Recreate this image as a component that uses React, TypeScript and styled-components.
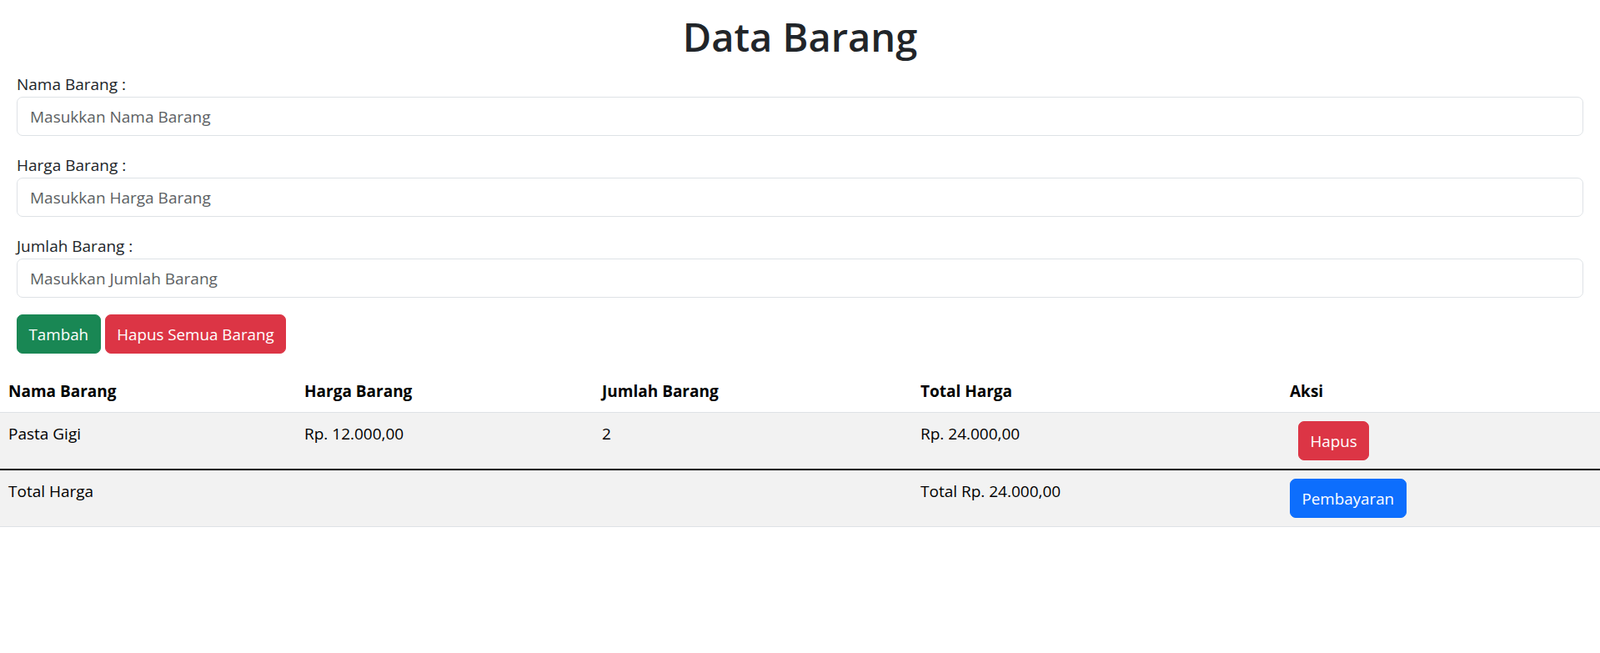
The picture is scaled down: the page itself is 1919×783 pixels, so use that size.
import React from "react";
import styled, { createGlobalStyle } from "styled-components";

const GlobalStyle = createGlobalStyle`
  * { box-sizing: border-box; }
  body {
    margin: 0;
    background: #ffffff;
    color: #212529;
    font-family: "Segoe UI", "Open Sans", "Noto Sans", sans-serif;
    font-size: 19px;
    line-height: 30px;
  }
`;

const Page = styled.div`
  width: 100%;
`;

const Container = styled.div`
  padding: 0 20px;
`;

const Title = styled.h1`
  margin: 14px 0 12px;
  text-align: center;
  font-size: 47px;
  line-height: 60px;
  font-weight: 600;
  color: #212529;
`;

const Field = styled.div`
  margin-bottom: 20px;
`;

const Label = styled.label`
  display: block;
  font-size: 19px;
  line-height: 30px;
  color: #212529;
`;

const Input = styled.input`
  display: block;
  width: 100%;
  height: 47px;
  padding: 7px 15px;
  font-family: inherit;
  font-size: 19px;
  line-height: 30px;
  color: #212529;
  background: #ffffff;
  border: 1px solid #dee2e6;
  border-radius: 7px;
  outline: none;
  &::placeholder {
    color: #5c5f63;
  }
`;

const ButtonRow = styled.div`
  display: flex;
  gap: 5px;
  margin-bottom: 20px;
`;

const variants: Record<string, string> = {
  success: "#198754",
  danger: "#dc3545",
  primary: "#0d6efd",
};

const Button = styled.button<{ $variant: "success" | "danger" | "primary"; $offset?: number }>`
  height: 47px;
  padding: 7px 13.5px;
  margin-left: ${(p) => p.$offset ?? 0}px;
  font-family: inherit;
  font-size: 18.8px;
  line-height: 30px;
  color: #ffffff;
  background: ${(p) => variants[p.$variant]};
  border: 1px solid ${(p) => variants[p.$variant]};
  border-radius: 7px;
  cursor: pointer;
`;

const Table = styled.table`
  width: 100%;
  border-collapse: collapse;
  table-layout: fixed;
  color: #000000;
`;

const HeadCell = styled.th`
  text-align: left;
  font-weight: 700;
  padding: 10px 10px;
  line-height: 30px;
  border-bottom: 1px solid #dee2e6;
  background: #ffffff;
`;

const Row = styled.tr<{ $divider?: boolean }>`
  background: #f2f2f2;
  & > td {
    border-top: ${(p) => (p.$divider ? "2px solid #000000" : "none")};
  }
`;

const Cell = styled.td`
  padding: 10px 10px;
  vertical-align: top;
  line-height: 30px;
  border-bottom: 1px solid #dee2e6;
`;

const columns = [
  { label: "Nama Barang", width: 355 },
  { label: "Harga Barang", width: 357 },
  { label: "Jumlah Barang", width: 382 },
  { label: "Total Harga", width: 443 },
  { label: "Aksi", width: undefined as number | undefined },
];

export default function App() {
  return (
    <Page>
      <GlobalStyle />
      <Container>
        <Title>Data Barang</Title>
        <Field>
          <Label htmlFor="nama">Nama Barang :</Label>
          <Input id="nama" placeholder="Masukkan Nama Barang" />
        </Field>
        <Field>
          <Label htmlFor="harga">Harga Barang :</Label>
          <Input id="harga" placeholder="Masukkan Harga Barang" />
        </Field>
        <Field>
          <Label htmlFor="jumlah">Jumlah Barang :</Label>
          <Input id="jumlah" placeholder="Masukkan Jumlah Barang" />
        </Field>
        <ButtonRow>
          <Button $variant="success">Tambah</Button>
          <Button $variant="danger">Hapus Semua Barang</Button>
        </ButtonRow>
      </Container>
      <Table>
        <colgroup>
          {columns.map((c) => (
            <col key={c.label} style={c.width ? { width: c.width } : undefined} />
          ))}
        </colgroup>
        <thead>
          <tr>
            {columns.map((c) => (
              <HeadCell key={c.label}>{c.label}</HeadCell>
            ))}
          </tr>
        </thead>
        <tbody>
          <Row>
            <Cell>Pasta Gigi</Cell>
            <Cell>Rp. 12.000,00</Cell>
            <Cell>2</Cell>
            <Cell>Rp. 24.000,00</Cell>
            <Cell>
              <Button $variant="danger" $offset={10}>Hapus</Button>
            </Cell>
          </Row>
        </tbody>
        <tfoot>
          <Row $divider>
            <Cell>Total Harga</Cell>
            <Cell></Cell>
            <Cell></Cell>
            <Cell>Total Rp. 24.000,00</Cell>
            <Cell>
              <Button $variant="primary">Pembayaran</Button>
            </Cell>
          </Row>
        </tfoot>
      </Table>
    </Page>
  );
}
